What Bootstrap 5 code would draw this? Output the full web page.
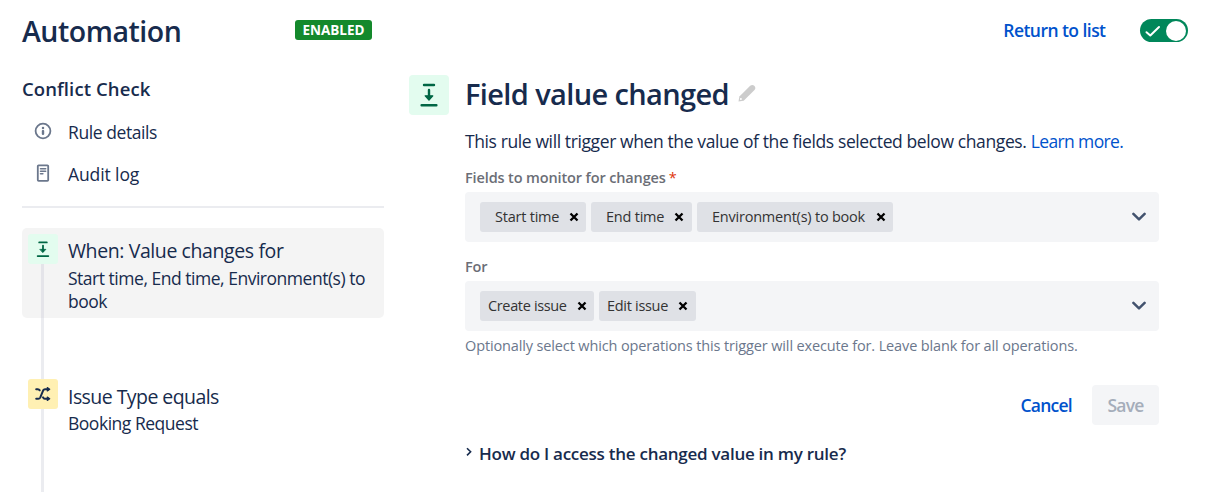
<!DOCTYPE html>
<html lang="en">
<head>
<meta charset="utf-8">
<title>Automation</title>
<link href="https://cdn.jsdelivr.net/npm/bootstrap@5.3.0/dist/css/bootstrap.min.css" rel="stylesheet">
<style>
body{font-family:"Open Sans","Noto Sans",sans-serif;color:#172b4d;font-size:17.5px;width:1211px;height:492px;overflow:hidden;background:#fff}
svg{display:block;flex:none}
.plain-link{text-decoration:none;color:#0052cc}
.topbar{height:60px;padding-left:22px;padding-right:23px}
.page-title{font-size:28.5px;font-weight:600;line-height:60px;padding-top:2px;width:273px;letter-spacing:-.48px}
.status-tag{background:#14892c;font-size:13.5px;font-weight:700;line-height:21px;height:20px;width:77px;border-radius:3px;letter-spacing:-.05px}
.return{font-weight:600;font-size:17.5px;line-height:60px;margin-right:34.5px;letter-spacing:-.55px}
.toggle{width:48px;height:23px;border-radius:12px;background:#00875a;margin-top:1px;padding:0 2px 0 5px}
.knob{width:20px;height:20px}
.side{width:362px;margin-left:22px}
.rule-name{font-size:18.5px;font-weight:600;line-height:24px;margin:17px 0 10px;letter-spacing:.1px}
.side-item{height:42px;letter-spacing:-.42px}
.side-item svg{margin:-2px 16px 0 12px}
.audit{letter-spacing:-.1px}
.rulebar{height:2px;background:#ebecf0;margin:11px 0 20px}
.step{border-radius:5px;padding-left:6px}
.step-on{background:#f4f4f4;height:90px;padding-top:6px}
.step-next{height:113px}
.rail{width:30px;margin-right:10px}
.tile{width:30px;height:30px;border-radius:3px}
.track{width:3px;background:#ebecf0;margin-left:13px}
.step-on .track{background:#e4e4e9}
.gapline{height:61px;margin-left:19px}
.mint{background:#e3fcef}
.sand{background:#fff0b3}
.t1{font-size:19.5px;line-height:24px;margin:6px 0 3px;letter-spacing:-.4px}
.t1-first{margin:5px 0 4px}
.t1-next{letter-spacing:-.56px}
.t2{line-height:23px;letter-spacing:-.48px}
.main{width:750px;margin-left:25px}
.tile-lg{width:40px;height:40px;border-radius:4px;margin-top:15px}
.panel{width:694px;margin-left:16px}
.h-main{font-size:29px;font-weight:600;line-height:40px;margin:14px 0 15px;letter-spacing:-.63px}
.h-main svg{margin:-2px 0 0 9px}
.desc{line-height:24px;margin-bottom:15px;letter-spacing:-.39px}
.desc a{letter-spacing:-.62px}
.lab{font-size:14.5px;font-weight:600;line-height:20px;color:#6b6e76;height:24px;letter-spacing:-.13px}
.lab span{color:#de350b;margin-left:3px;font-weight:400}
.lab-for{margin-top:15px}
.selectbox{height:50px;background:#f4f5f7;border-radius:4px;padding:0 13px 0 15px;gap:5px}
.chip{height:30px;background:#dfe1e6;border-radius:3px;font-size:14.5px;color:#333;padding:0 7px 0 15px;letter-spacing:-.22px;white-space:nowrap}
.start-chip{width:106px}
.end-chip{width:101px;padding-right:8px}
.env-chip{width:196px}
.create-chip{width:114px;padding-left:8px;letter-spacing:-.35px}
.edit-chip{width:97px;padding:0 8px;letter-spacing:-.3px}
.help{font-size:14.5px;line-height:20px;color:#6b778c;margin-top:5px;letter-spacing:-.135px;white-space:nowrap}
.actions{margin-top:29px;gap:20px;font-weight:600;letter-spacing:-.75px}
.save{width:67px;height:40px;background:#f4f5f7;color:#a5adba;border-radius:4px}
.faq{font-size:17px;font-weight:600;line-height:24px;margin-top:17px;letter-spacing:-.26px}
.faq svg{margin:-5px 5px 0 0}
</style>
</head>
<body>
<header class="topbar d-flex align-items-center">
  <h1 class="page-title m-0">Automation</h1>
  <span class="status-tag text-white text-center">ENABLED</span>
  <a class="plain-link return ms-auto" href="#">Return to list</a>
  <div class="toggle d-flex align-items-center justify-content-between">
    <svg width="16" height="14" viewBox="0 0 16 14" fill="none" stroke="#fff" stroke-width="2" stroke-linecap="round" stroke-linejoin="round"><path d="M1.5 8.2 5.3 11.5 14 3"/></svg>
    <div class="knob rounded-circle bg-white"></div>
  </div>
</header>
<div class="d-flex">
  <aside class="side">
    <div class="rule-name">Conflict Check</div>
    <div class="side-item d-flex align-items-center">
      <svg width="18" height="18" viewBox="0 0 18 18"><circle cx="9" cy="9" r="7.4" fill="none" stroke="#6b778c" stroke-width="1.8"/><circle cx="9" cy="5.9" r="1.25" fill="#6b778c"/><rect x="7.8" y="8.1" width="2.4" height="4.8" rx=".8" fill="#6b778c"/></svg>
      <span>Rule details</span>
    </div>
    <div class="side-item audit d-flex align-items-center">
      <svg width="18" height="18" viewBox="0 0 18 18" fill="none" stroke="#6b778c" stroke-linecap="round"><rect x="3.8" y="1.3" width="10.4" height="15.6" rx=".8" stroke-width="1.8"/><path d="M6.5 4.7h5.2M6.5 7.2h5.2M6.5 9.8h2.4" stroke-width="1.5"/></svg>
      <span>Audit log</span>
    </div>
    <div class="rulebar"></div>
    <div class="step step-on d-flex">
      <div class="rail d-flex flex-column">
        <div class="tile mint d-flex align-items-center justify-content-center">
          <svg width="14" height="18" viewBox="0 0 20 26" fill="none" stroke="#006644" stroke-width="2.6" stroke-linecap="round"><path d="M4.5 3.5h11M2.3 23.2h15.4M10 8v8"/><path d="M5.8 13.5h8.4L10 18z" fill="#006644" stroke-width="1" stroke-linejoin="round"/></svg>
        </div>
        <div class="track flex-grow-1"></div>
      </div>
      <div>
        <div class="t1 t1-first">When: Value changes for</div>
        <div class="t2">Start time, End time, Environment(s) to<br>book</div>
      </div>
    </div>
    <div class="track gapline"></div>
    <div class="step step-next d-flex">
      <div class="rail d-flex flex-column">
        <div class="tile sand d-flex align-items-center justify-content-center">
          <svg width="16" height="14" viewBox="0 0 16 14" fill="none" stroke="#172b4d" stroke-width="2" stroke-linecap="round" stroke-linejoin="round"><path d="M1.2 2.2h1.6q1.3 0 1.9 1.1M1.2 11.8h2.1q1.3 0 1.9-1.2L8.2 3.3q.6-1.1 1.8-1.1H13M8 10.4q.6 1.3 1.8 1.3H13"/><path d="m12.3.6 2.4 1.6-2.4 1.7zM12.3 10.1l2.4 1.6-2.4 1.7z" fill="#172b4d" stroke-width="1.2"/></svg>
        </div>
        <div class="track flex-grow-1"></div>
      </div>
      <div>
        <div class="t1 t1-next">Issue Type equals</div>
        <div class="t2">Booking Request</div>
      </div>
    </div>
  </aside>
  <main class="main d-flex">
    <div class="tile-lg mint d-flex align-items-center justify-content-center">
      <svg width="20" height="26" viewBox="0 0 20 26" fill="none" stroke="#006644" stroke-width="2.4" stroke-linecap="round"><path d="M5 3h10M2.6 23.2h14.8M10 8v8"/><path d="M6.2 13.8h7.6L10 18.2z" fill="#006644" stroke-width="1.2" stroke-linejoin="round"/></svg>
    </div>
    <div class="panel">
      <h2 class="h-main d-flex align-items-center">Field value changed
        <svg width="18" height="18" viewBox="0 0 18 18" fill="#ccc"><path d="M.5 17.6 1.4 12.6 12.2 1.8q2.2-1.8 4.3.2 1.7 2 0 4.1L5.7 16.7z"/><circle cx="2.9" cy="15.1" r="1" fill="#fff"/></svg>
      </h2>
      <div class="desc text-nowrap">This rule will trigger when the value of the fields selected below changes. <a class="plain-link" href="#">Learn more.</a></div>
      <div class="lab">Fields to monitor for changes<span>*</span></div>
      <div class="selectbox d-flex align-items-center">
        <div class="chip start-chip d-flex align-items-center justify-content-between">Start time<svg width="10" height="10" viewBox="0 0 10 10" stroke="#000" stroke-width="2.3"><path d="m1.5 1.5 7 7m0-7-7 7"/></svg></div>
        <div class="chip end-chip d-flex align-items-center justify-content-between">End time<svg width="10" height="10" viewBox="0 0 10 10" stroke="#000" stroke-width="2.3"><path d="m1.5 1.5 7 7m0-7-7 7"/></svg></div>
        <div class="chip env-chip d-flex align-items-center justify-content-between">Environment(s) to book<svg width="10" height="10" viewBox="0 0 10 10" stroke="#000" stroke-width="2.3"><path d="m1.5 1.5 7 7m0-7-7 7"/></svg></div>
        <svg class="ms-auto" width="14" height="10" viewBox="0 0 14 10" fill="none" stroke="#42526e" stroke-width="2.5" stroke-linecap="round" stroke-linejoin="round"><path d="m1.4 1.9 5.6 5.5 5.6-5.5"/></svg>
      </div>
      <div class="lab lab-for">For</div>
      <div class="selectbox d-flex align-items-center">
        <div class="chip create-chip d-flex align-items-center justify-content-between">Create issue<svg width="10" height="10" viewBox="0 0 10 10" stroke="#000" stroke-width="2.3"><path d="m1.5 1.5 7 7m0-7-7 7"/></svg></div>
        <div class="chip edit-chip d-flex align-items-center justify-content-between">Edit issue<svg width="10" height="10" viewBox="0 0 10 10" stroke="#000" stroke-width="2.3"><path d="m1.5 1.5 7 7m0-7-7 7"/></svg></div>
        <svg class="ms-auto" width="14" height="10" viewBox="0 0 14 10" fill="none" stroke="#42526e" stroke-width="2.5" stroke-linecap="round" stroke-linejoin="round"><path d="m1.4 1.9 5.6 5.5 5.6-5.5"/></svg>
      </div>
      <div class="help">Optionally select which operations this trigger will execute for. Leave blank for all operations.</div>
      <div class="actions d-flex justify-content-end align-items-center">
        <a class="plain-link" href="#">Cancel</a>
        <div class="save d-flex align-items-center justify-content-center">Save</div>
      </div>
      <div class="faq d-flex align-items-center"><svg width="9" height="10" viewBox="0 0 9 10" fill="none" stroke="#172b4d" stroke-width="1.6"><path d="m2 1.2 3.6 3.6L2 8.4"/></svg>How do I access the changed value in my rule?</div>
    </div>
  </main>
</div>
</body>
</html>
